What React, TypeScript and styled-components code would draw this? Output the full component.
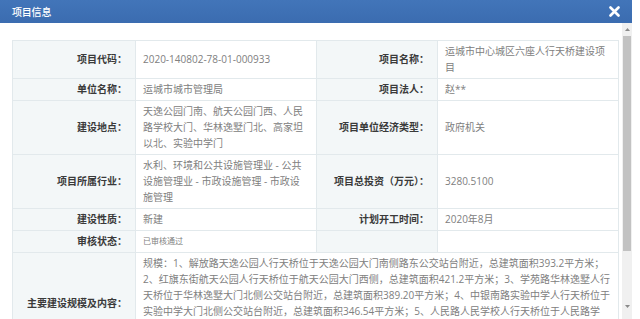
import React from "react";
import styled, { createGlobalStyle } from "styled-components";

const GlobalStyle = createGlobalStyle`
  html, body {
    margin: 0;
    padding: 0;
    background: #ffffff;
  }
  body {
    font-family: "Open Sans", "Noto Sans CJK SC", sans-serif;
    font-size: 10px;
    overflow: hidden;
  }
`;

const Dialog = styled.div`
  width: 632px;
  height: 319px;
  display: flex;
  flex-direction: column;
  background: #ffffff;
`;

const Header = styled.div`
  height: 23px;
  flex: none;
  display: flex;
  align-items: center;
  justify-content: space-between;
  padding: 0 12px 0 12px;
  background: linear-gradient(#4275b9, #3b6cb0);
  color: #ffffff;
`;

const Title = styled.span`
  font-size: 10px;
  font-weight: 500;
  letter-spacing: -0.2px;
`;

const Close = styled.button`
  width: 11px;
  height: 11px;
  padding: 0;
  border: none;
  background: transparent;
  display: flex;
  align-items: center;
  justify-content: center;
`;

const Body = styled.div`
  flex: 1;
  min-height: 0;
  display: flex;
`;

const Content = styled.div`
  flex: 1;
  min-width: 0;
  overflow: hidden;
  padding: 17px 4px 0 12px;
`;

const Table = styled.table`
  width: 606px;
  table-layout: fixed;
  border-collapse: collapse;
  border: 1px solid #d6e0e6;
`;

const Cell = styled.td<{ $label?: boolean }>`
  padding: 2px 7px 3px 7px;
  border: 1px solid #e2e9ec;
  line-height: 16px;
  font-size: 10px;
  vertical-align: middle;
  text-align: ${(p) => (p.$label ? "right" : "left")};
  font-weight: ${(p) => (p.$label ? 700 : 400)};
  color: ${(p) => (p.$label ? "#3a3a3a" : "#808080")};
  background: ${(p) => (p.$label ? "#f3f7f8" : "#ffffff")};
  padding-right: ${(p) => (p.$label ? "8px" : "7px")};
  white-space: nowrap;
`;

const Line = styled.div<{ $small?: boolean }>`
  white-space: nowrap;
  font-size: ${(p) => (p.$small ? "8px" : "10px")};
`;

const ScrollBar = styled.div`
  width: 10px;
  flex: none;
  display: flex;
  flex-direction: column;
  background: #f0f0f0;
  padding-bottom: 6px;
`;

const ScrollArrow = styled.div`
  height: 13px;
  flex: none;
  display: flex;
  align-items: center;
  justify-content: center;
`;

const Thumb = styled.div`
  height: 215px;
  flex: none;
  margin: 0 1px;
  background: #c2c2c2;
`;

const Track = styled.div`
  flex: 1;
`;

const Gutter = styled.div`
  flex: 1;
  background: #ffffff;
`;

type Row = {
  l1: string;
  v1: string[];
  l2?: string;
  v2?: string[];
  small?: boolean;
};

const rows: Row[] = [
  {
    l1: "项目代码：",
    v1: ["2020-140802-78-01-000933"],
    l2: "项目名称：",
    v2: ["运城市中心城区六座人行天桥建设项", "目"],
  },
  { l1: "单位名称：", v1: ["运城市城市管理局"], l2: "项目法人：", v2: ["赵**"] },
  {
    l1: "建设地点：",
    v1: ["天逸公园门南、航天公园门西、人民", "路学校大门、华林逸墅门北、高家坦", "以北、实验中学门"],
    l2: "项目单位经济类型：",
    v2: ["政府机关"],
  },
  {
    l1: "项目所属行业：",
    v1: ["水利、环境和公共设施管理业 - 公共", "设施管理业 - 市政设施管理 - 市政设", "施管理"],
    l2: "项目总投资（万元）：",
    v2: ["3280.5100"],
  },
  { l1: "建设性质：", v1: ["新建"], l2: "计划开工时间：", v2: ["2020年8月"] },
  { l1: "审核状态：", v1: ["已审核通过"], l2: "", v2: [""], small: true },
];

const scale = [
  "规模：1、解放路天逸公园人行天桥位于天逸公园大门南侧路东公交站台附近，总建筑面积393.2平方米；",
  "2、红旗东街航天公园人行天桥位于航天公园大门西侧，总建筑面积421.2平方米；3、学苑路华林逸墅人行",
  "天桥位于华林逸墅大门北侧公交站台附近，总建筑面积389.20平方米；4、中银南路实验中学人行天桥位于",
  "实验中学大门北侧公交站台附近，总建筑面积346.54平方米；5、人民路人民学校人行天桥位于人民路学",
  "校大门北侧公交站台附近，总建筑面积402.60平方米；6、高家坦以北人行天桥位于高家坦以北公交站",
  "台附近，总建筑面积372.80平方米。内容：新建人行天桥六座。",
];

const Lines = ({ items, small }: { items: string[]; small?: boolean }) => (
  <>
    {items.map((t, i) => (
      <Line key={i} $small={small}>
        {t || "\u00a0"}
      </Line>
    ))}
  </>
);

const Triangle = ({ down }: { down?: boolean }) => (
  <svg width="5" height="3" viewBox="0 0 5 3">
    <path d={down ? "M0 0 L5 0 L2.5 3 Z" : "M0 3 L5 3 L2.5 0 Z"} fill="#8a8a8a" />
  </svg>
);

export default function App() {
  return (
    <>
      <GlobalStyle />
      <Dialog>
        <Header>
          <Title>项目信息</Title>
          <Close aria-label="关闭">
            <svg width="11" height="11" viewBox="0 0 11 11">
              <path d="M1.5 1.5 L9.5 9.5 M9.5 1.5 L1.5 9.5" stroke="#ffffff" strokeWidth="2.6" strokeLinecap="round" />
            </svg>
          </Close>
        </Header>
        <Body>
          <Content>
            <Table>
              <colgroup>
                <col style={{ width: 123 }} />
                <col style={{ width: 181 }} />
                <col style={{ width: 121 }} />
                <col style={{ width: 181 }} />
              </colgroup>
              <tbody>
                {rows.map((r, i) => (
                  <tr key={i}>
                    <Cell $label>{r.l1}</Cell>
                    <Cell>
                      <Lines items={r.v1} small={r.small} />
                    </Cell>
                    <Cell $label>{r.l2}</Cell>
                    <Cell>
                      <Lines items={r.v2 ?? [""]} />
                    </Cell>
                  </tr>
                ))}
                <tr>
                  <Cell $label>主要建设规模及内容：</Cell>
                  <Cell colSpan={3}>
                    <Lines items={scale} />
                  </Cell>
                </tr>
              </tbody>
            </Table>
          </Content>
          <ScrollBar>
            <ScrollArrow>
              <Triangle />
            </ScrollArrow>
            <Thumb />
            <Track />
            <ScrollArrow>
              <Triangle down />
            </ScrollArrow>
          </ScrollBar>
        </Body>
      </Dialog>
    </>
  );
}
